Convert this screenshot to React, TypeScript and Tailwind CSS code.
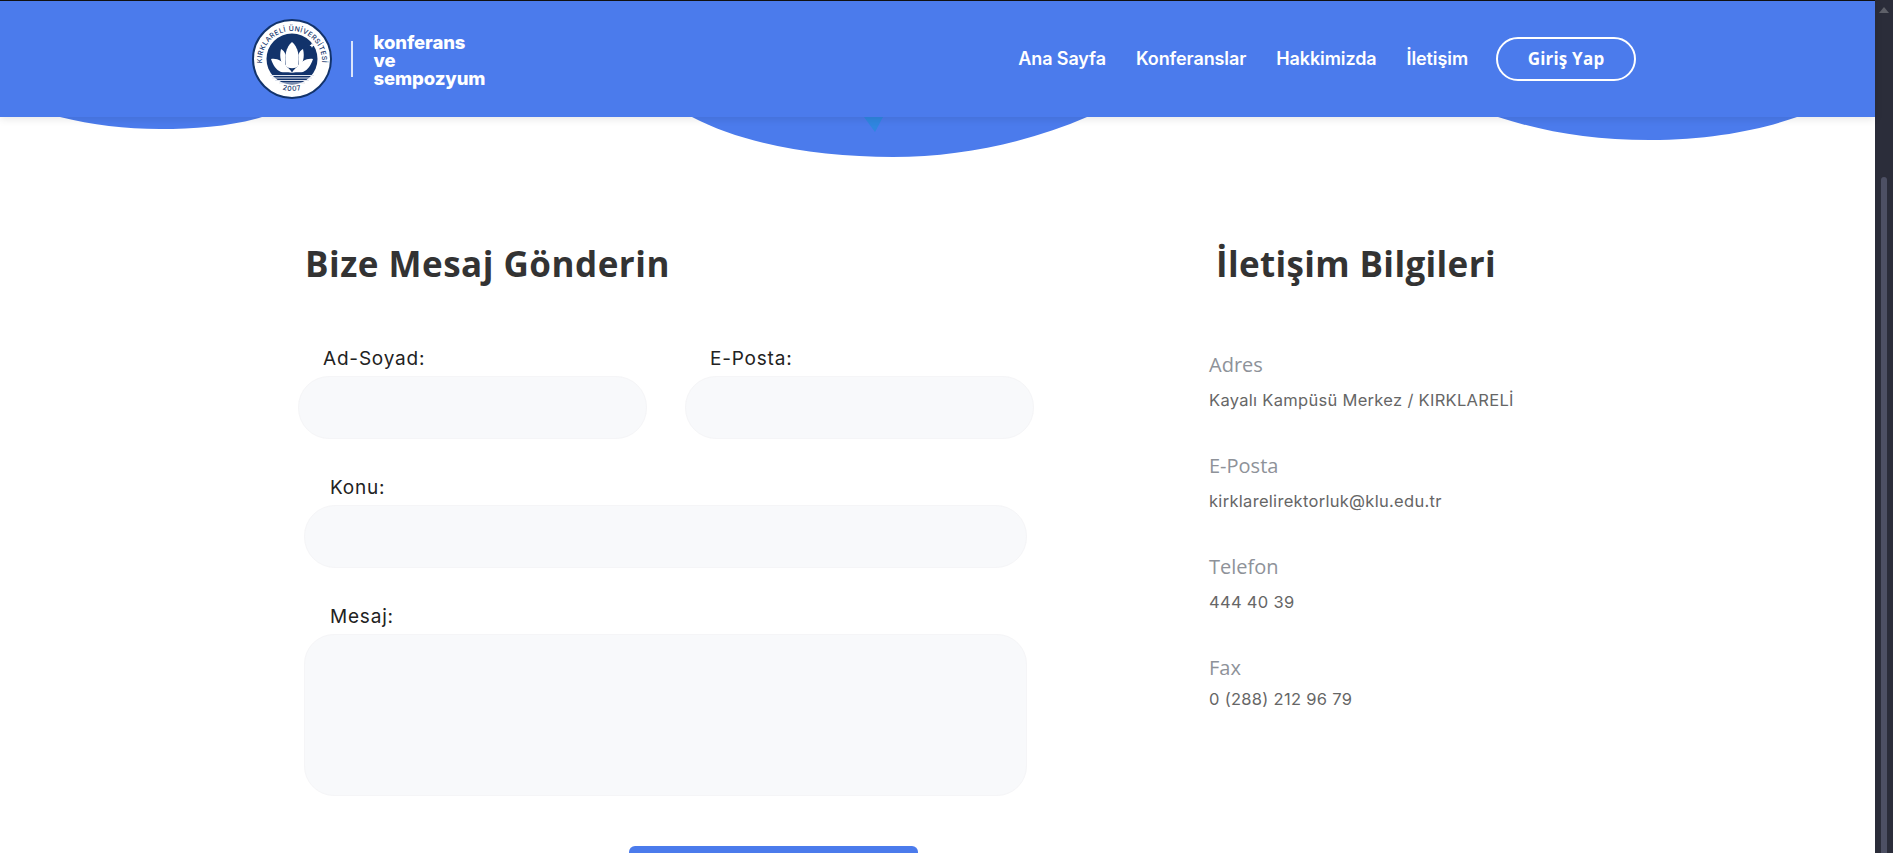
const navLinks = ["Ana Sayfa", "Konferanslar", "Hakkimizda", "İletişim"];

const contactInfo = [
  { label: "Adres", value: "Kayalı Kampüsü Merkez / KIRKLARELİ", gap: "mb-[42px]", labelGap: "mb-[11px]" },
  { label: "E-Posta", value: "kirklarelirektorluk@klu.edu.tr", gap: "mb-[42px]", labelGap: "mb-[11px]" },
  { label: "Telefon", value: "444 40 39", gap: "mb-[42px]", labelGap: "mb-[11px]" },
  { label: "Fax", value: "0 (288) 212 96 79", gap: "", labelGap: "mb-[7px]" },
];

function UniversityLogo() {
  return (
    <svg viewBox="0 0 80 80" className="h-20 w-20 shrink-0">
      <defs>
        <path id="ring-top" d="M16 60 A30 30 0 1 1 64 60" />
        <path id="ring-bottom" d="M24 67.700 A32 32 0 0 0 56 67.700" />
      </defs>
      <circle cx="40" cy="40" r="39" fill="#fff" stroke="#12336b" strokeWidth="2" />
      <circle cx="40" cy="40" r="25.500" fill="#12336b" />
      <text fontSize="6.9" fill="#12336b" fontFamily="Inter, sans-serif" fontWeight="500" letterSpacing="0.45">
        <textPath href="#ring-top" startOffset="50%" textAnchor="middle">
          KIRKLARELİ ÜNİVERSİTESİ
        </textPath>
      </text>
      <text fontSize="7" fill="#12336b" fontFamily="Inter, sans-serif" fontWeight="500" letterSpacing="0.6">
        <textPath href="#ring-bottom" startOffset="50%" textAnchor="middle">
          2007
        </textPath>
      </text>
      <path d="M60 24 l.8 1.6 1.6.8 -1.6.8 -.8 1.6 -.8-1.600 -1.600-.8 1.600-.8z" fill="#fff" />
      <path d="M40 23 C46 28 48 37 46 47 C44 50 36 50 34 47 C32 37 34 28 40 23Z" fill="#fff" />
      <path d="M29 30 C31 31 33 33 33.500 36 C32.500 40 33 45 34 48 C29 46 27 38 29 30Z" fill="#fff" />
      <path d="M51 30 C49 31 47 33 46.500 36 C47.500 40 47 45 46 48 C51 46 53 38 51 30Z" fill="#fff" />
      <path d="M19 40 C25 39 31 42 35 48 C37 50 39 51 40 54 C37 52.500 33 54 29 53 C24 51 21 46 19 40Z" fill="#fff" />
      <path d="M61 40 C55 39 49 42 45 48 C43 50 41 51 40 54 C43 52.500 47 54 51 53 C56 51 59 46 61 40Z" fill="#fff" />
      <path d="M18 56.500 H62 M20 59 H60 M23 61.500 H57 M27 64 H53" stroke="#dfe4ee" strokeWidth="1.2" />
    </svg>
  );
}

function Waves() {
  return (
    <svg viewBox="0 0 1875 45" className="pointer-events-none absolute top-[117px] left-0 h-[45px] w-[1875px]">
      <path d="M60 0 C92 8 125 12 160 12 C196 12 232 9 262 0Z" fill="#4b7bec" />
      <path d="M692 0 C745 28 820 40 893 40 C960 40 1030 25 1087 0Z" fill="#4b7bec" />
      <path d="M1498 0 C1545 15 1590 23 1650 23 C1710 23 1760 13 1797 0Z" fill="#4b7bec" />
      <path d="M864 0 H883 L875 15Z" fill="#2f86e0" />
    </svg>
  );
}

function Header() {
  return (
    <header className="relative z-10 flex h-[117px] items-center border-t border-[#111] bg-[#4b7bec] pr-[239px] pl-[252px] shadow-[0_2px_8px_rgba(0,0,0,0.1)]">
      <UniversityLogo />
      <div className="mr-[21px] ml-[19px] h-9 w-[1.5px] bg-white/80" />
      <div className="pt-[1px] font-['Inter',sans-serif] text-[18.500px] leading-[18px] font-extrabold tracking-[-0.1px] text-white">
        konferans
        <br />
        ve
        <br />
        sempozyum
      </div>
      <nav className="ml-auto flex items-center gap-[30px] font-['Inter',sans-serif] text-[18px] font-semibold tracking-[-0.1px] text-white">
        {navLinks.map((link) => (
          <a key={link} href="#" className="-mt-[1px]">
            {link}
          </a>
        ))}
        <a
          href="#"
          className="-ml-[2px] flex h-11 w-[140px] items-center justify-center rounded-[22px] border-2 border-white font-['Open_Sans',sans-serif] text-[17px] font-bold tracking-[0.2px]"
        >
          Giriş Yap
        </a>
      </nav>
    </header>
  );
}

function FieldLabel({ text, className }: { text: string; className: string }) {
  return (
    <label className={`block pb-[4px] font-['Inter',sans-serif] text-[19px] leading-[27px] tracking-[0.8px] text-[#222] ${className}`}>
      {text}
    </label>
  );
}

function ContactForm() {
  const fieldClass = "block h-[63px] w-full rounded-[31px] border border-[#f5f5f7] bg-[#f8f9fb]";

  return (
    <form className="w-[736px] shrink-0">
      <h2 className="mb-[58px] ml-[7px] font-['Open_Sans',sans-serif] text-[35px] leading-[46px] font-bold tracking-[0.5px] text-[#333]">
        Bize Mesaj Gönderin
      </h2>
      <div className="grid grid-cols-2 gap-x-[38px]">
        <div>
          <FieldLabel text="Ad-Soyad:" className="pl-[25px]" />
          <input className={fieldClass} />
        </div>
        <div>
          <FieldLabel text="E-Posta:" className="pl-[25px]" />
          <input className={fieldClass} />
        </div>
      </div>
      <div className="mt-[35px] mr-[7px] ml-[6px]">
        <FieldLabel text="Konu:" className="pl-[26px]" />
        <input className={fieldClass} />
      </div>
      <div className="mt-[35px] mr-[7px] ml-[6px]">
        <FieldLabel text="Mesaj:" className="pl-[26px]" />
        <textarea className="block h-[162px] w-full resize-none rounded-[30px] border border-[#f5f5f7] bg-[#f8f9fb]" />
      </div>
      <button type="button" className="mt-[50px] ml-[331px] block h-[60px] w-[289px] rounded-md bg-[#4b7bec]" />
    </form>
  );
}

function ContactDetails() {
  return (
    <section className="ml-[175px]">
      <h2 className="mb-[66px] ml-[7px] font-['Open_Sans',sans-serif] text-[35px] leading-[46px] font-bold tracking-[0.35px] text-[#333]">
        İletişim Bilgileri
      </h2>
      {contactInfo.map((item) => (
        <div key={item.label} className={item.gap}>
          <p className={`font-['Open_Sans',sans-serif] text-[20px] leading-[24px] text-[#8e9299] ${item.labelGap}`}>{item.label}</p>
          <p className="font-['Inter',sans-serif] text-[16.500px] leading-[24px] tracking-[0.3px] text-[#666]">{item.value}</p>
        </div>
      ))}
    </section>
  );
}

function Scrollbar() {
  return (
    <aside className="flex h-full w-[18px] shrink-0 flex-col items-center bg-[#2b2d3a]">
      <svg viewBox="0 0 10 6" className="mt-[7px] h-[6px] w-[10px]">
        <path d="M0 6 L5 0 L10 6Z" fill="#5e6069" />
      </svg>
      <div className="mt-[164px] w-[6px] flex-1 rounded-t-[3px] bg-[#4d5064]" />
    </aside>
  );
}

export default function App() {
  return (
    <div className="flex h-[853px] overflow-hidden bg-white">
      <div className="relative min-w-0 flex-1">
        <Header />
        <Waves />
        <main className="flex pt-[124px] pl-[298px]">
          <ContactForm />
          <ContactDetails />
        </main>
      </div>
      <Scrollbar />
    </div>
  );
}
